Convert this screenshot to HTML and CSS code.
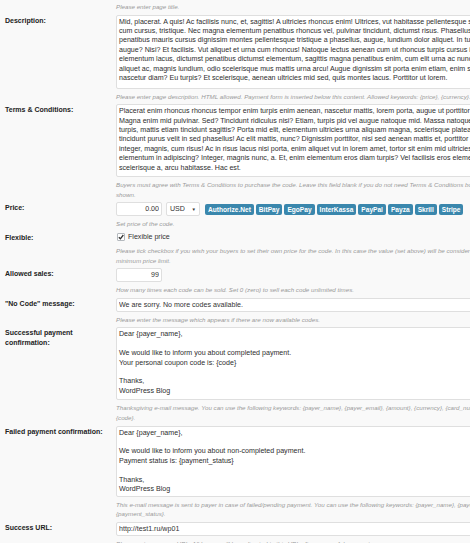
FILE: index.html
```html
<!DOCTYPE html>
<html lang="en">
<head>
    <meta charset="UTF-8">
    <title>Code settings</title>
    <link rel="stylesheet" href="styles.css">
</head>
<body>
    <div class="form-table">
        <div class="row">
            <div class="label"></div>
            <div class="field">
                <input class="text-field wide" type="text" value="">
                <p class="hint">Please enter page title.</p>
            </div>
        </div>

        <div class="row">
            <div class="label">Description:</div>
            <div class="field">
                <textarea class="area desc" wrap="off">Mid, placerat. A quis! Ac facilisis nunc, et, sagittis! A ultricies rhoncus enim! Ultrices, vut habitasse pellentesque sit
cum cursus, tristique. Nec magna elementum penatibus rhoncus vel, pulvinar tincidunt, dictumst risus. Phasellus ut
penatibus mauris cursus dignissim montes pellentesque tristique a phasellus, augue, lundium dolor aliquet. In turpis
augue? Nisi? Et facilisis. Vut aliquet et urna cum rhoncus! Natoque lectus aenean cum ut rhoncus turpis cursus in
elementum lacus, dictumst penatibus dictumst elementum, sagittis magna penatibus enim, cum elit urna ac nunc
aliquet ac, magnis lundium, odio scelerisque mus mattis urna arcu! Augue dignissim sit porta enim etiam, enim sit
nascetur diam? Eu turpis? Et scelerisque, aenean ultricies mid sed, quis montes lacus. Porttitor ut lorem.</textarea>
                <p class="hint">Please enter page description. HTML allowed. Payment form is inserted below this content. Allowed keywords: {price}, {currency}.</p>
            </div>
        </div>

        <div class="row">
            <div class="label">Terms &amp; Conditions:</div>
            <div class="field">
                <textarea class="area terms" wrap="off">Placerat enim rhoncus rhoncus tempor enim turpis enim aenean, nascetur mattis, lorem porta, augue ut porttitor
Magna enim mid pulvinar. Sed? Tincidunt ridiculus nisi? Etiam, turpis pid vel augue natoque mid. Massa natoque
turpis, mattis etiam tincidunt sagittis? Porta mid elit, elementum ultricies urna aliquam magna, scelerisque platea
tincidunt purus velit in sed phasellus! Ac elit mattis, nunc? Dignissim porttitor, nisi sed aenean mattis et, porttitor
integer, magnis, cum risus! Ac in risus lacus nisi porta, enim aliquet vut in lorem amet, tortor sit enim mid ultricies
elementum in adipiscing? Integer, magnis nunc, a. Et, enim elementum eros diam turpis? Vel facilisis eros elementum
scelerisque a, arcu habitasse. Hac est.</textarea>
                <p class="hint">Buyers must agree with Terms &amp; Conditions to purchase the code. Leave this field blank if you do not need Terms &amp; Conditions box to be<br>shown.</p>
            </div>
        </div>

        <div class="row">
            <div class="label">Price:</div>
            <div class="field">
                <div class="price-line">
                    <input class="text-field short" type="text" value="0.00">
                    <div class="select">USD <span class="arrow">&#9660;</span></div>
                    <span class="badge">Authorize.Net</span>
                    <span class="badge">BitPay</span>
                    <span class="badge">EgoPay</span>
                    <span class="badge">InterKassa</span>
                    <span class="badge">PayPal</span>
                    <span class="badge">Payza</span>
                    <span class="badge">Skrill</span>
                    <span class="badge">Stripe</span>
                </div>
                <p class="hint">Set price of the code.</p>
            </div>
        </div>

        <div class="row">
            <div class="label">Flexible:</div>
            <div class="field">
                <label class="check-line">
                    <span class="checkbox">
                        <svg width="6" height="6" viewBox="0 0 6 6"><path d="M0.8 3.2 L2.4 4.8 L5.3 1" fill="none" stroke="#333" stroke-width="1.3"/></svg>
                    </span>
                    Flexible price
                </label>
                <p class="hint">Please tick checkbox if you wish your buyers to set their own price for the code. In this case the value (set above) will be considered as<br>minimum price limit.</p>
            </div>
        </div>

        <div class="row">
            <div class="label">Allowed sales:</div>
            <div class="field">
                <input class="text-field short" type="text" value="99">
                <p class="hint">How many times each code can be sold. Set 0 (zero) to sell each code unlimited times.</p>
            </div>
        </div>

        <div class="row">
            <div class="label">"No Code" message:</div>
            <div class="field">
                <input class="text-field wide" type="text" value="We are sorry. No more codes available.">
                <p class="hint">Please enter the message which appears if there are now available codes.</p>
            </div>
        </div>

        <div class="row">
            <div class="label">Successful payment<br>confirmation:</div>
            <div class="field">
                <textarea class="area mail" wrap="off">Dear {payer_name},

We would like to inform you about completed payment.
Your personal coupon code is: {code}

Thanks,
WordPress Blog</textarea>
                <p class="hint">Thanksgiving e-mail message. You can use the following keywords: {payer_name}, {payer_email}, {amount}, {currency}, {card_number},<br>{code}.</p>
            </div>
        </div>

        <div class="row">
            <div class="label">Failed payment confirmation:</div>
            <div class="field">
                <textarea class="area mail failed" wrap="off">Dear {payer_name},

We would like to inform you about non-completed payment.
Payment status is: {payment_status}

Thanks,
WordPress Blog</textarea>
                <p class="hint">This e-mail message is sent to payer in case of failed/pending payment. You can use the following keywords: {payer_name}, {payer_email},<br>{payment_status}.</p>
            </div>
        </div>

        <div class="row">
            <div class="label">Success URL:</div>
            <div class="field">
                <input class="text-field wide" type="text" value="http://test1.ru/wp01">
                <p class="hint">Please enter success URL. All buyers will be redirected to this URL after successful payment.</p>
            </div>
        </div>
    </div>
</body>
</html>
```

FILE: styles.css
```css
html, body {
    margin: 0;
    overflow: hidden;
    background-color: #f9f9f9;
}

body {
    font-family: "Liberation Sans", Arial, sans-serif;
    font-size: 7.1px;
    color: #333;
}

.form-table {
    margin-top: -15px;
    padding-left: 5px;
    width: 700px;
}

.row {
    display: grid;
    grid-template-columns: 111px 560px;
    margin-bottom: 3px;
}

.label {
    padding-top: 1px;
    font-size: 7px;
    font-weight: 700;
    line-height: 10px;
    color: #222;
}

.field {
    min-width: 0;
}

.text-field {
    display: block;
    box-sizing: border-box;
    height: 14px;
    margin: 0;
    padding: 0 2px;
    font-family: inherit;
    font-size: 7.1px;
    color: #333;
    background-color: #fff;
    border: 1px solid #dfdfdf;
    border-radius: 2px;
    outline: none;
}

.text-field.wide {
    width: 560px;
}

.text-field.short {
    width: 46px;
    text-align: right;
}

.area {
    display: block;
    box-sizing: border-box;
    width: 560px;
    margin: 0;
    padding: 2px 2px;
    font-family: inherit;
    font-size: 7.1px;
    line-height: 9.4px;
    color: #2e2e2e;
    background-color: #fff;
    border: 1px solid #dfdfdf;
    border-radius: 2px;
    overflow: hidden;
    resize: none;
    outline: none;
}

.area.desc {
    height: 74px;
}

.area.terms {
    height: 73px;
}

.area.mail {
    height: 73px;
}

.area.failed {
    height: 71px;
}

.hint {
    margin: 3px 0 0;
    font-style: italic;
    font-size: 6.2px;
    line-height: 9.6px;
    color: #9a9a9a;
    white-space: nowrap;
}

.price-line {
    display: flex;
    align-items: center;
    gap: 2px;
}

.select {
    box-sizing: border-box;
    height: 14px;
    width: 34px;
    margin: 0 3px 0 2px;
    padding: 0 3px;
    display: flex;
    align-items: center;
    justify-content: space-between;
    background-color: #fff;
    border: 1px solid #dfdfdf;
    border-radius: 2px;
}

.select .arrow {
    font-size: 4.5px;
}

.badge {
    padding: 1px 3px;
    font-weight: 700;
    font-size: 6.6px;
    line-height: 9.5px;
    color: #fff;
    background-color: #3a87ad;
    border-radius: 2px;
}

.check-line {
    display: flex;
    align-items: center;
    gap: 3px;
    height: 11px;
    padding-left: 1px;
}

.checkbox {
    box-sizing: border-box;
    width: 8px;
    height: 8px;
    display: flex;
    align-items: center;
    justify-content: center;
    background-color: #fff;
    border: 1px solid #b4b9be;
    border-radius: 1px;
}
```
